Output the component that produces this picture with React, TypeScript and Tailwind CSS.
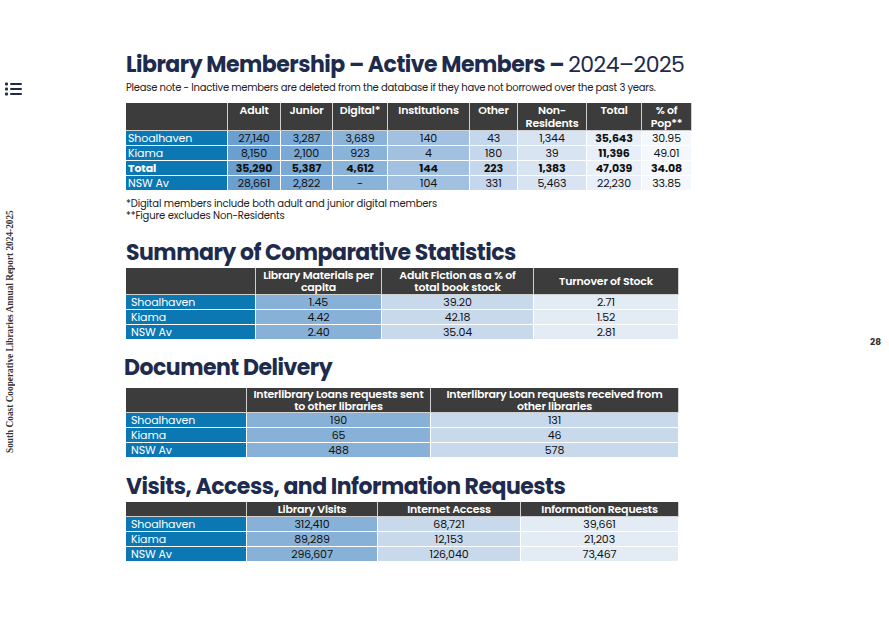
import React from "react";

const F = "font-['Poppins','Inter','Noto_Sans',sans-serif]";

type Cell = { v: string; b?: boolean };

function Table1() {
  const cols = ["102px", "53px", "52px", "55px", "82px", "48px", "69px", "55px", "50px"];
  const bgs = ["bg-[#0b78b4]", "bg-[#6a9fd0]", "bg-[#7aa9d5]", "bg-[#8ab3da]", "bg-[#a2c0e0]", "bg-[#c5d7ec]", "bg-[#d9e4f2]", "bg-[#e9eff8]", "bg-[#f4f7fb]"];
  const heads = ["", "Adult", "Junior", "Digital*", "Institutions", "Other", "Non-\nResidents", "Total", "% of\nPop**"];
  const rows: { label: string; bold?: boolean; cells: Cell[] }[] = [
    { label: "Shoalhaven", cells: [{ v: "27,140" }, { v: "3,287" }, { v: "3,689" }, { v: "140" }, { v: "43" }, { v: "1,344" }, { v: "35,643", b: true }, { v: "30.95" }] },
    { label: "Kiama", cells: [{ v: "8,150" }, { v: "2,100" }, { v: "923" }, { v: "4" }, { v: "180" }, { v: "39" }, { v: "11,396", b: true }, { v: "49.01" }] },
    { label: "Total", bold: true, cells: ["35,290", "5,387", "4,612", "144", "223", "1,383", "47,039", "34.08"].map((v) => ({ v, b: true })) },
    { label: "NSW Av", cells: ["28,661", "2,822", "-", "104", "331", "5,463", "22,230", "33.85"].map((v) => ({ v })) },
  ];
  return (
    <div className="grid w-[566px]" style={{ gridTemplateColumns: cols.join(" ") }}>
      {heads.map((h, i) => (
        <div key={i} className="h-[28px] bg-[#3c3c3c] border-r border-b border-[#d0d0d0] text-white text-[11px] font-semibold tracking-[-0.2px] leading-[13px] text-center pt-[1px] whitespace-pre-line">
          {h}
        </div>
      ))}
      {rows.map((r, ri) => (
        <React.Fragment key={ri}>
          <div className={`h-[15px] ${bgs[0]} border-r border-b border-white text-white text-[11px] tracking-[-0.1px] leading-[14px] pl-[2px] ${r.bold ? "font-bold" : "font-normal"}`}>{r.label}</div>
          {r.cells.map((c, ci) => (
            <div key={ci} className={`h-[15px] ${bgs[ci + 1]} border-r border-b border-white text-[#111] text-[11px] tracking-[-0.1px] leading-[14px] text-center ${c.b ? "font-bold" : "font-normal"}`}>
              {c.v}
            </div>
          ))}
        </React.Fragment>
      ))}
    </div>
  );
}

function SimpleTable({ cols, heads, rows, bgs, headH }: { cols: string[]; heads: string[]; rows: string[][]; bgs: string[]; headH: string }) {
  return (
    <div className="grid w-[553px]" style={{ gridTemplateColumns: cols.join(" ") }}>
      {heads.map((h, i) => (
        <div key={i} className={`${headH} bg-[#3c3c3c] border-r border-b border-[#d0d0d0] text-white text-[11px] font-semibold tracking-[-0.2px] leading-[12px] text-center flex items-center justify-center whitespace-pre-line`}>
          {h}
        </div>
      ))}
      {rows.map((r, ri) => (
        <React.Fragment key={ri}>
          {r.map((c, ci) => (
            <div key={ci} className={`h-[15px] ${bgs[ci]} border-r border-b border-white text-[11px] tracking-[-0.1px] leading-[14px] ${ci === 0 ? "text-white pl-[5px]" : "text-[#111] text-center"}`}>
              {c}
            </div>
          ))}
        </React.Fragment>
      ))}
    </div>
  );
}

const H = "h-[30px] text-[22px] tracking-[-0.5px] leading-[30px] font-bold text-[#1e2b4c] whitespace-nowrap";

export default function App() {
  return (
    <div className={`w-[889px] h-[628px] bg-white flex ${F}`}>
      <div className="w-[30px] flex flex-col items-start">
        <svg className="mt-[82px] ml-[5px]" width="18" height="14" viewBox="0 0 18 14">
          <g fill="#1e2b4c">
            <rect x="0" y="0.5" width="3" height="3" rx="1" />
            <rect x="0" y="5.5" width="3" height="3" rx="1" />
            <rect x="0" y="10.5" width="3" height="3" rx="1" />
            <rect x="5" y="1" width="12" height="2" rx="1" />
            <rect x="5" y="6" width="12" height="2" rx="1" />
            <rect x="5" y="11" width="12" height="2" rx="1" />
          </g>
        </svg>
        <div className="mt-[114px] ml-[5px] h-[244px] [writing-mode:vertical-rl] rotate-180 font-['Liberation_Serif',serif] font-bold text-[9.3px] leading-[10px] text-[#333] whitespace-nowrap text-center">
          South Coast Cooperative Libraries Annual Report 2024-2025
        </div>
      </div>
      <div className="w-[832px] pl-[96px] flex flex-col">
        <h1 className={`mt-[50px] ${H}`}>
          Library Membership – Active Members – <span className="font-normal">2024–2025</span>
        </h1>
        <p className="mt-[1px] text-[10px] tracking-[-0.25px] leading-[13px] text-[#222] whitespace-nowrap">
          Please note - Inactive members are deleted from the database if they have not borrowed over the past 3 years.
        </p>
        <div className="mt-[9px]">
          <Table1 />
        </div>
        <div className="mt-[7px] text-[10px] tracking-[-0.15px] leading-[12px] text-[#222]">
          <div>*Digital members include both adult and junior digital members</div>
          <div>**Figure excludes Non-Residents</div>
        </div>
        <h2 className={`mt-[16px] ${H}`}>Summary of Comparative Statistics</h2>
        <SimpleTable
          cols={["130px", "126px", "152px", "145px"]}
          headH="h-[27px]"
          heads={["", "Library Materials per\ncapita", "Adult Fiction as a % of\ntotal book stock", "Turnover of Stock"]}
          bgs={["bg-[#0b78b4]", "bg-[#88b1d8]", "bg-[#c8d9ec]", "bg-[#e3ebf5]"]}
          rows={[
            ["Shoalhaven", "1.45", "39.20", "2.71"],
            ["Kiama", "4.42", "42.18", "1.52"],
            ["NSW Av", "2.40", "35.04", "2.81"],
          ]}
        />
        <h2 className={`mt-[13px] -ml-[2px] ${H}`}>Document Delivery</h2>
        <div className="mt-[5px]">
          <SimpleTable
            cols={["121px", "184px", "248px"]}
            headH="h-[25px]"
            heads={["", "Interlibrary Loans requests sent\nto other libraries", "Interlibrary Loan requests received from\nother libraries"]}
            bgs={["bg-[#0b78b4]", "bg-[#88b1d8]", "bg-[#c8d9ec]"]}
            rows={[
              ["Shoalhaven", "190", "131"],
              ["Kiama", "65", "46"],
              ["NSW Av", "488", "578"],
            ]}
          />
        </div>
        <h2 className={`mt-[14px] ${H}`}>Visits, Access, and Information Requests</h2>
        <SimpleTable
          cols={["121px", "131px", "143px", "158px"]}
          headH="h-[15px]"
          heads={["", "Library Visits", "Internet Access", "Information Requests"]}
          bgs={["bg-[#0b78b4]", "bg-[#88b1d8]", "bg-[#c8d9ec]", "bg-[#e3ebf5]"]}
          rows={[
            ["Shoalhaven", "312,410", "68,721", "39,661"],
            ["Kiama", "89,289", "12,153", "21,203"],
            ["NSW Av", "296,607", "126,040", "73,467"],
          ]}
        />
      </div>
      <div className="w-[27px] flex flex-col items-center">
        <div className="mt-[336px] text-[9px] font-bold text-[#333] leading-[12px]">28</div>
      </div>
    </div>
  );
}
